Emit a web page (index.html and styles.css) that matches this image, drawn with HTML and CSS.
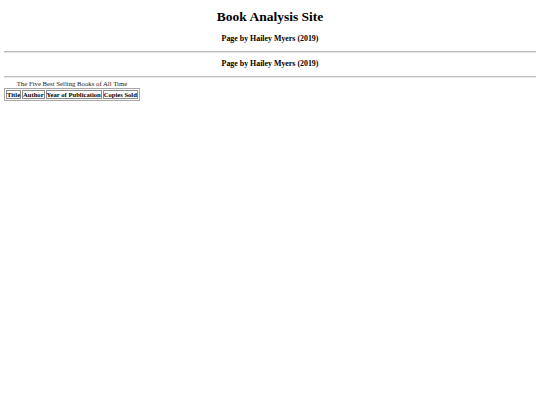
FILE: index.html
```html
<!DOCTYPE html>
<html>
<head>
<meta charset="utf-8">
<title>Book Analysis Site</title>
<link rel="stylesheet" href="styles.css">
</head>
<body>
<h1 class="site-title">Book Analysis Site</h1>
<h3 class="byline">Page by Hailey Myers (2019)</h3>
<hr class="rule">
<h3 class="byline byline-lower">Page by Hailey Myers (2019)</h3>
<hr class="rule">
<table class="books">
<caption class="books-caption">The Five Best Selling Books of All Time</caption>
<tr>
<th>Title</th>
<th>Author</th>
<th>Year of Publication</th>
<th>Copies Sold</th>
</tr>
</table>
</body>
</html>
```

FILE: styles.css
```css
html, body {
  background: #fff;
}
body {
  margin: 4px;
  font-family: "Liberation Serif", "Times New Roman", serif;
  color: #000;
}
.site-title {
  margin: 5px 0 9px;
  font-size: 13.5px;
  line-height: 16px;
  font-weight: bold;
  text-align: center;
}
.byline {
  margin: 8px 0;
  font-size: 7.9px;
  line-height: 9px;
  font-weight: bold;
  text-align: center;
}
.byline-lower {
  margin-top: 6px;
}
.rule {
  margin: 0;
  height: 0;
  border: none;
  border-top: 1px solid #bdbdbd;
  border-bottom: 1px solid #e6e6e6;
}
.books {
  border: 1px solid #a8a8a8;
  border-spacing: 1px;
  font-size: 6.6px;
}
.books-caption {
  font-size: 6.75px;
  line-height: 8px;
  padding-top: 2px;
  color: #222;
}
.books th {
  border: 1px solid #8c8c8c;
  padding: 0;
  line-height: 7px;
  font-weight: bold;
}
```
